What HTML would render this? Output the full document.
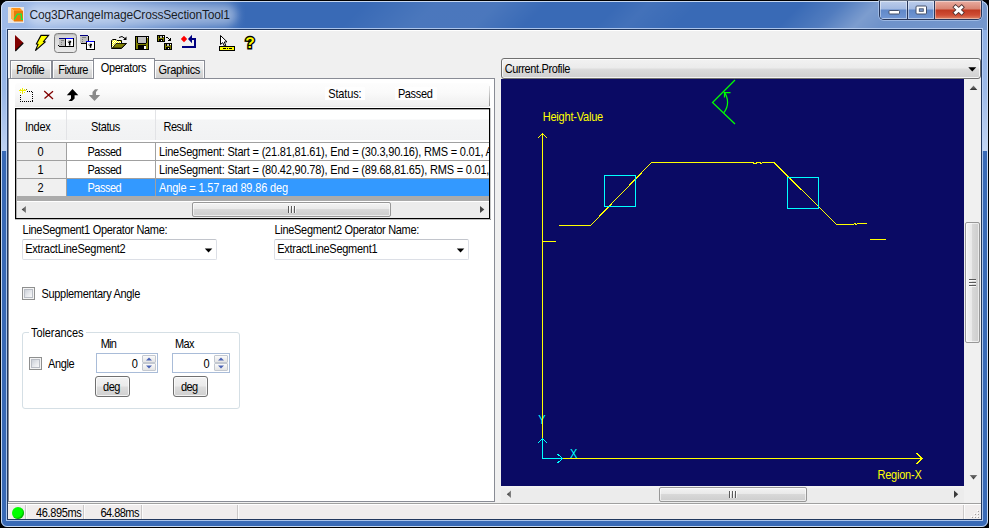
<!DOCTYPE html>
<html><head><meta charset="utf-8"><title>Cog3DRangeImageCrossSectionTool1</title>
<style>
html,body{margin:0;padding:0;}
body{width:989px;height:528px;overflow:hidden;background:#000;position:relative;font-family:"Liberation Sans",sans-serif;font-size:11px;color:#000;}
.a{position:absolute;box-sizing:border-box;}
.t{position:absolute;white-space:pre;}
#frame{left:0;top:0;width:989px;height:528px;border-radius:8px 8px 7px 7px;background:#000;overflow:hidden;}
#client{left:8px;top:30px;width:973px;height:489px;background:#f0f0f0;}
svg{position:absolute;overflow:visible;}
.px{shape-rendering:crispEdges;}

</style></head><body>
<div id="frame" class="a">
<div class="a" style="left:1px;top:1px;width:987px;height:526px;border-radius:7px 7px 6px 6px;background:#396ab6;"></div>
<div class="a" style="left:1px;top:1px;width:987px;height:29px;border-radius:7px 7px 0 0;background:
linear-gradient(135deg,rgba(255,255,255,0) 0,rgba(255,255,255,0) 36%,rgba(255,255,255,.09) 43%,rgba(255,255,255,.09) 49%,rgba(255,255,255,0) 54%,rgba(255,255,255,0) 61%,rgba(255,255,255,.05) 64%,rgba(255,255,255,0) 69%,rgba(255,255,255,0) 79%,rgba(255,255,255,.12) 83%,rgba(255,255,255,.34) 86.500%,rgba(255,255,255,.27) 89%,rgba(255,255,255,.3) 100%),
linear-gradient(90deg,rgba(160,187,232,1) 0,rgba(157,185,231,.95) 40px,rgba(150,180,228,.8) 110px,rgba(120,155,215,.45) 180px,rgba(60,108,185,0) 245px,rgba(60,108,185,0) 100%),
#396ab6;"></div>
<div class="a" style="left:2px;top:30px;width:5px;height:490px;background:linear-gradient(180deg,#8fb0e4 0,#98b6e6 60px,#bdd1f1 121px,#396ab6 121px,#396ab6 100%);"></div>
<div class="a" style="left:982px;top:30px;width:5px;height:490px;background:linear-gradient(180deg,#8fb0e4 0,#9dbae8 60px,#c3d5f2 121px,#396ab6 121px,#396ab6 100%);"></div>
<div class="a" style="left:1px;top:1px;width:987px;height:526px;border-radius:7px 7px 6px 6px;border:1px solid rgba(225,235,250,.85);"></div>
<div class="a" style="left:6px;top:28px;width:977px;height:493px;border:1px solid rgba(190,212,244,.85);"></div>
<div class="a" style="left:7px;top:29px;width:975px;height:491px;border:1px solid #22385e;"></div>

</div>
<div id="client" class="a"></div>
<div class="a" style="left:34px;top:11px;width:196px;height:8px;border-radius:4px;background:rgba(255,255,255,.42);box-shadow:0 0 8px 7px rgba(255,255,255,.42);"></div>
<svg style="left:8px;top:7px" width="16" height="16" viewBox="0 0 16 16">
<rect width="16" height="16" fill="#ece5df"/>
<polygon points="3,1 12,1 15,4 6,4" fill="#ff9418"/>
<polygon points="3,1 6,4 6,14.5 3,11.5" fill="#ffb04e"/>
<polygon points="6,4 15,4 15,14.5 6,14.5" fill="#e67a08"/>
<polyline points="6.2,12.3 9.4,7.2 13.2,7.2 13.6,12.3 15,12.3" fill="none" stroke="#10f040" stroke-width="1.3"/>
</svg>
<div class="t" style="left:29.60px;top:8px;font-size:12px;line-height:15px;height:15px;letter-spacing:-0.185px;color:rgba(0,0,0,.86);">Cog3DRangeImageCrossSectionTool1</div>
<div class="a" style="left:879px;top:1px;width:103px;height:19px;border:1px solid #26365a;border-top:none;border-radius:0 0 5px 5px;overflow:hidden;box-shadow:0 0 0 1px rgba(200,220,250,.5);">
<div class="a" style="left:0;top:0;width:28px;height:18px;background:linear-gradient(180deg,#bccdea 0,#a3bae2 8px,#6088c8 9px,#7197d4 18px);border-right:1px solid #26365a;box-shadow:inset 0 0 0 1px rgba(255,255,255,.45);"></div>
<div class="a" style="left:28px;top:0;width:27px;height:18px;background:linear-gradient(180deg,#bccdea 0,#a3bae2 8px,#6088c8 9px,#7197d4 18px);border-right:1px solid #26365a;box-shadow:inset 0 0 0 1px rgba(255,255,255,.45);"></div>
<div class="a" style="left:55px;top:0;width:46px;height:18px;background:linear-gradient(180deg,#e9ada1 0,#d88472 8px,#c03a22 9px,#cf4c34 14px,#dd8466 18px);box-shadow:inset 0 0 0 1px rgba(255,255,255,.4);"></div>
</div>
<svg style="left:879px;top:0" width="103" height="20" viewBox="879 0 103 20">
<rect x="889" y="10.500" width="10.500" height="3.500" rx="0.8" fill="#fff" stroke="#44506a" stroke-width="1"/>
<rect x="916" y="6" width="10.500" height="8" rx="1" fill="#fff" stroke="#44506a" stroke-width="1"/>
<rect x="919.300" y="8.800" width="4" height="2.500" fill="#7d9cd0" stroke="#44506a" stroke-width="0.9"/>
<path d="M955.600,7.200 L961.600,12.600 M961.600,7.200 L955.600,12.600" stroke="#4a3030" stroke-width="4.600" stroke-linecap="square" fill="none"/>
<path d="M955.600,7.200 L961.600,12.600 M961.600,7.200 L955.600,12.600" stroke="#fff" stroke-width="2.900" stroke-linecap="square" fill="none"/>
</svg>
<div class="a" style="left:8px;top:30px;width:973px;height:1px;background:#fff;"></div>
<div class="a" style="left:54px;top:33px;width:23px;height:20px;border:1px solid #7d7d7d;border-radius:3.5px;background:linear-gradient(180deg,#d2d2d2 0,#dedede 40%,#e9e9e9 100%);box-shadow:inset 0 1px 1px rgba(0,0,0,.12);"></div>
<svg style="left:8px;top:30px" width="260" height="26" viewBox="8 30 260 26">
<!-- run -->
<polygon points="15,35 23.3,42.7 15,51" fill="#800000"/>
<polyline points="15.3,51 23.3,43" fill="none" stroke="#000" stroke-width="1.1"/>
<!-- lightning -->
<polygon points="41,35.4 48.6,35.4 43.6,41.4 45.2,42 35.4,50.6 38,44.4 36.4,44 " fill="#ffff00" stroke="#000" stroke-width="1.1" stroke-linejoin="miter"/>
<g class="px">
<!-- icon3: split windows -->
<rect x="59" y="38" width="7" height="1" fill="#000080"/>
<rect x="59" y="39" width="6" height="7" fill="#c0c0c0"/>
<rect x="61" y="40" width="3" height="1" fill="#808080"/>
<rect x="61" y="42" width="1" height="1" fill="#808080"/>
<rect x="61" y="44" width="1" height="1" fill="#808080"/>
<rect x="66" y="38" width="7" height="1" fill="#0000ff"/>
<rect x="65" y="39" width="8" height="7" fill="#ffffff"/>
<rect x="73" y="38" width="1" height="9" fill="#000"/>
<rect x="59" y="46" width="15" height="1" fill="#000"/>
<rect x="58" y="45" width="1" height="1" fill="#000"/>
<rect x="65" y="39" width="1" height="7" fill="#000"/>
<rect x="67.800" y="40.800" width="3.400" height="1.900" rx=".6" fill="#000" shape-rendering="auto"/>
<rect x="68.900" y="42" width="1.500" height="3.500" fill="#000" shape-rendering="auto"/>
<rect x="68.200" y="41" width="1" height="0.800" fill="#fff" shape-rendering="auto"/>
<!-- icon4: cascaded windows -->
<rect x="80" y="35" width="8" height="1" fill="#000080"/>
<rect x="80" y="36" width="8" height="7" fill="#c0c0c0"/>
<rect x="82" y="37" width="4" height="1" fill="#808080"/>
<rect x="82" y="39" width="1" height="1" fill="#808080"/>
<rect x="82" y="41" width="1" height="1" fill="#808080"/>
<rect x="88" y="36" width="1" height="7" fill="#000"/>
<rect x="81" y="43" width="6" height="1" fill="#000"/>
<rect x="86" y="41" width="8" height="1" fill="#0000ff"/>
<rect x="87" y="42" width="7" height="7" fill="#fff"/>
<rect x="86" y="42" width="1" height="8" fill="#000"/>
<rect x="94" y="41" width="1" height="9" fill="#000"/>
<rect x="86" y="49" width="9" height="1" fill="#000"/>
<rect x="88.600" y="43.700" width="3.400" height="1.900" rx=".6" fill="#000" shape-rendering="auto"/>
<rect x="89.800" y="45" width="1.500" height="2.800" fill="#000" shape-rendering="auto"/>
<rect x="89" y="43.900" width="1" height="0.800" fill="#fff" shape-rendering="auto"/>
</g>
<!-- open folder -->
<defs><pattern id="dith" width="2" height="2" patternUnits="userSpaceOnUse"><rect width="2" height="2" fill="#ffff00"/><rect width="1" height="1" fill="#fff"/><rect x="1" y="1" width="1" height="1" fill="#fff"/></pattern></defs>
<polygon points="111.500,47.500 111.500,40.500 113,39.500 116,39.500 117,40.500 121.500,40.500 121.500,43.500 126.500,43.500 121.500,48.500 111.500,48.500" fill="url(#dith)" stroke="#000" stroke-width="1"/>
<polygon points="112.500,48 116,43.500 126,43.500 121.500,48" fill="#808000" stroke="#000" stroke-width="0.8"/>
<path d="M119,37.500 Q122,35 125,38.500" fill="none" stroke="#000" stroke-width="1"/>
<polygon points="126.500,36.500 126.500,40 123,40" fill="#000"/>
<g class="px">
<!-- floppy -->
<rect x="135" y="36" width="14" height="14" fill="#000"/>
<rect x="136" y="37" width="12" height="12" fill="#808000"/>
<rect x="138" y="37" width="8" height="6" fill="#c0c0c0"/>
<rect x="138" y="36" width="8" height="1" fill="#000"/>
<rect x="137" y="37" width="1" height="6" fill="#000"/>
<rect x="146" y="37" width="1" height="6" fill="#000"/>
<rect x="138" y="43" width="8" height="1" fill="#000"/>
<rect x="138" y="45" width="8" height="4" fill="#000"/>
<rect x="144" y="46" width="2" height="3" fill="#fff"/>
<rect x="147" y="37" width="1" height="1" fill="#fff"/>
<!-- two floppies -->
<rect x="157" y="35" width="8" height="7" fill="#000"/>
<rect x="158" y="36" width="1" height="5" fill="#808000"/>
<rect x="163" y="37" width="1" height="4" fill="#808000"/>
<rect x="158" y="38" width="6" height="1" fill="#808000"/>
<rect x="160" y="36" width="2" height="2" fill="#c0c0c0"/>
<rect x="163" y="36" width="1" height="1" fill="#fff"/>
<rect x="161" y="40" width="1" height="1" fill="#fff"/>
<rect x="164" y="43" width="8" height="7" fill="#000"/>
<rect x="165" y="44" width="1" height="5" fill="#808000"/>
<rect x="170" y="45" width="1" height="4" fill="#808000"/>
<rect x="165" y="46" width="6" height="1" fill="#808000"/>
<rect x="167" y="44" width="2" height="2" fill="#c0c0c0"/>
<rect x="170" y="44" width="1" height="1" fill="#fff"/>
<rect x="168" y="48" width="1" height="1" fill="#fff"/>
<rect x="166" y="37" width="2" height="1" fill="#000"/>
<rect x="168" y="38" width="1" height="1" fill="#000"/>
<rect x="169" y="39" width="1" height="1" fill="#000"/>
<rect x="170" y="38" width="1" height="3" fill="#000"/>
<rect x="168" y="40" width="3" height="1" fill="#000"/>
</g>
<!-- red diamond & blue arrow -->
<polygon points="184,35.800 187.200,39 184,42.200 180.800,39" fill="#ff0000"/>
<polygon points="188,39 192,34.800 192,43.200" fill="#000080"/>
<g class="px">
<rect x="192" y="38" width="4" height="2" fill="#000080"/>
<rect x="194" y="38" width="2" height="10" fill="#000080"/>
<rect x="182" y="46" width="14" height="2" fill="#000080"/>
</g>
<!-- cursor over ruler -->
<polygon points="220.500,35.500 220.500,44.500 222.700,42.600 224.400,46 225.800,45.400 224.300,42 227,41.800" fill="#fff" stroke="#000" stroke-width="1" stroke-linejoin="miter"/>
<g class="px">
<rect x="219" y="46" width="16" height="5" fill="#000"/>
<rect x="220" y="47" width="14" height="3" fill="#ffff00"/>
<rect x="223" y="48" width="3" height="1" fill="#000"/>
<rect x="227" y="48" width="1" height="1" fill="#000"/>
<rect x="229" y="48" width="3" height="1" fill="#000"/>
</g>
<text x="250" y="48.300" text-anchor="middle" font-family="Liberation Sans, sans-serif" font-weight="bold" font-size="15.500" fill="#ffff00" stroke="#000" stroke-width="2.800" opacity="0.999" paint-order="stroke" stroke-linejoin="miter" style="text-rendering:geometricPrecision">?</text>
</svg>
<div class="a" style="left:8px;top:78px;width:487px;height:424px;background:#fff;border:1px solid #898c95;"></div>
<div class="a" style="left:10px;top:60px;width:42px;height:18px;border:1px solid #898c95;border-bottom:none;background:linear-gradient(180deg,#f2f2f2 0,#ebebeb 8px,#dddddd 9px,#cfcfcf 100%);box-shadow:inset 1px 1px 0 rgba(255,255,255,.9),inset -1px 0 0 rgba(255,255,255,.9);"></div>
<div class="a" style="left:52px;top:60px;width:42px;height:18px;border:1px solid #898c95;border-bottom:none;background:linear-gradient(180deg,#f2f2f2 0,#ebebeb 8px,#dddddd 9px,#cfcfcf 100%);box-shadow:inset 1px 1px 0 rgba(255,255,255,.9),inset -1px 0 0 rgba(255,255,255,.9);"></div>
<div class="a" style="left:154px;top:60px;width:51px;height:18px;border:1px solid #898c95;border-bottom:none;background:linear-gradient(180deg,#f2f2f2 0,#ebebeb 8px,#dddddd 9px,#cfcfcf 100%);box-shadow:inset 1px 1px 0 rgba(255,255,255,.9),inset -1px 0 0 rgba(255,255,255,.9);"></div>
<div class="a" style="left:93px;top:58px;width:62px;height:21px;border:1px solid #898c95;border-bottom:none;background:#fff;"></div>
<div class="t" style="left:16.30px;top:64px;font-size:11px;line-height:13px;height:13px;letter-spacing:-0.484px;transform:scaleY(1.13);transform-origin:0 10px;">Profile</div>
<div class="t" style="left:58.30px;top:64px;font-size:11px;line-height:13px;height:13px;letter-spacing:-0.589px;transform:scaleY(1.13);transform-origin:0 10px;">Fixture</div>
<div class="t" style="left:100.80px;top:62px;font-size:11px;line-height:13px;height:13px;letter-spacing:-0.414px;transform:scaleY(1.13);transform-origin:0 10px;">Operators</div>
<div class="t" style="left:158.60px;top:64px;font-size:11px;line-height:13px;height:13px;letter-spacing:-0.329px;transform:scaleY(1.13);transform-origin:0 10px;">Graphics</div>
<div class="a" style="left:15px;top:83px;width:475px;height:24px;border-radius:3px 3px 0 0;background:linear-gradient(180deg,#fdfdfd 0,#fafafa 40%,#efefef 92%,#e6e6e6 100%);"></div>
<div class="a" style="left:489px;top:86px;width:1px;height:20px;background:linear-gradient(180deg,#e8e8e8,#909090);"></div>
<div class="a" style="left:325px;top:87px;width:40px;height:13px;background:#fefefe;"></div>
<div class="a" style="left:395px;top:87px;width:42px;height:13px;background:#fefefe;"></div>
<div class="t" style="left:328.20px;top:88px;font-size:11px;line-height:13px;height:13px;letter-spacing:-0.136px;transform:scaleY(1.13);transform-origin:0 10px;">Status:</div>
<div class="t" style="left:397.90px;top:88px;font-size:11px;line-height:13px;height:13px;letter-spacing:-0.367px;transform:scaleY(1.13);transform-origin:0 10px;">Passed</div>
<svg style="left:15px;top:84px" width="100" height="22" viewBox="15 84 100 22">
<g class="px">
<rect x="20" y="91" width="12" height="10" fill="none" stroke="#000" stroke-width="1" stroke-dasharray="1 1" transform="translate(.5,.5)"/>
<rect x="19" y="89" width="7" height="5" fill="#fbfbfb"/>
<rect x="22" y="88" width="1" height="6" fill="#f0f000"/>
<rect x="19" y="90" width="7" height="1" fill="#f0f000"/>
<rect x="20" y="89" width="1" height="1" fill="#f0f000"/><rect x="24" y="89" width="1" height="1" fill="#f0f000"/>
<rect x="20" y="92" width="1" height="1" fill="#f0f000"/><rect x="24" y="92" width="1" height="1" fill="#f0f000"/>
<rect x="26" y="89" width="1" height="1" fill="#808000"/>
</g>
<path d="M44.200,91 L53,99 M53,91.300 L44.500,98.600" stroke="#800000" stroke-width="1.300" fill="none"/>
<polygon points="72.500,89 78.300,95.200 74.600,95.200 74.600,98.500 72,101 68.600,101 71,98.500 71,95.200 66.800,95.200" fill="#000"/>
<polygon points="94.500,101 88.800,95 92.500,95 92.500,92 95,89.300 98.300,89.300 96,92 96,95 100.200,95" fill="#8a8a8a"/>
</svg>
<div class="a" style="left:15px;top:108px;width:476px;height:112px;background:#fff;"></div>
<div class="a" style="left:17px;top:110px;width:472px;height:108px;background:#ababab;"></div>
<div class="a" style="left:15px;top:108px;width:475px;height:1px;background:#000;"></div>
<div class="a" style="left:15px;top:108px;width:1px;height:111px;background:#000;"></div>
<div class="a" style="left:15px;top:218px;width:475px;height:1px;background:#000;"></div>
<div class="a" style="left:489px;top:108px;width:1px;height:111px;background:#000;"></div>
<div class="a" style="left:16px;top:109px;width:473px;height:1px;background:rgba(0,0,0,.32);"></div>
<div class="a" style="left:16px;top:109px;width:1px;height:109px;background:rgba(0,0,0,.32);"></div>
<div class="a" style="left:15px;top:219px;width:476px;height:1px;background:rgba(0,0,0,.25);"></div>
<div class="a" style="left:490px;top:108px;width:1px;height:112px;background:rgba(0,0,0,.22);"></div>
<div class="a" style="left:17px;top:110px;width:472px;height:30px;background:linear-gradient(180deg,#ffffff 0,#ffffff 9px,#f4f5f6 10px,#f1f2f3 100%);"></div>
<div class="a" style="left:66px;top:110px;width:1px;height:30px;background:#e2e3e6;"></div>
<div class="a" style="left:155px;top:110px;width:1px;height:30px;background:#e2e3e6;"></div>
<div class="t" style="left:24.90px;top:121px;font-size:11px;line-height:13px;height:13px;letter-spacing:-0.264px;transform:scaleY(1.13);transform-origin:0 10px;">Index</div>
<div class="t" style="left:91.00px;top:121px;font-size:11px;line-height:13px;height:13px;letter-spacing:-0.365px;transform:scaleY(1.13);transform-origin:0 10px;">Status</div>
<div class="t" style="left:163.60px;top:121px;font-size:11px;line-height:13px;height:13px;letter-spacing:-0.548px;transform:scaleY(1.13);transform-origin:0 10px;">Result</div>
<div class="a" style="left:17px;top:143px;width:472px;height:17px;background:#fff;"></div>
<div class="a" style="left:17px;top:143px;width:49px;height:17px;background:#f0f0f0;"></div>
<div class="a" style="left:17px;top:160px;width:472px;height:1px;background:#a0a0a0;"></div>
<div class="a" style="left:66px;top:143px;width:1px;height:18px;background:#a0a0a0;"></div>
<div class="a" style="left:155px;top:143px;width:1px;height:18px;background:#a0a0a0;"></div>
<div class="t" style="left:37.60px;top:146px;font-size:11px;line-height:13px;height:13px;letter-spacing:0.075px;transform:scaleY(1.13);transform-origin:0 10px;">0</div>
<div class="t" style="left:87.40px;top:146px;font-size:11px;line-height:13px;height:13px;letter-spacing:-0.484px;transform:scaleY(1.13);transform-origin:0 10px;">Passed</div>
<div class="t" style="left:159.00px;top:146px;font-size:11px;line-height:13px;height:13px;letter-spacing:-0.193px;width:330px;overflow:hidden;transform:scaleY(1.13);transform-origin:0 10px;">LineSegment: Start = (21.81,81.61), End = (30.3,90.16), RMS = 0.01, Angle</div>
<div class="a" style="left:17px;top:161px;width:472px;height:17px;background:#fff;"></div>
<div class="a" style="left:17px;top:161px;width:49px;height:17px;background:#f0f0f0;"></div>
<div class="a" style="left:17px;top:178px;width:472px;height:1px;background:#a0a0a0;"></div>
<div class="a" style="left:66px;top:161px;width:1px;height:18px;background:#a0a0a0;"></div>
<div class="a" style="left:155px;top:161px;width:1px;height:18px;background:#a0a0a0;"></div>
<div class="t" style="left:37.60px;top:164px;font-size:11px;line-height:13px;height:13px;letter-spacing:0.075px;transform:scaleY(1.13);transform-origin:0 10px;">1</div>
<div class="t" style="left:87.40px;top:164px;font-size:11px;line-height:13px;height:13px;letter-spacing:-0.484px;transform:scaleY(1.13);transform-origin:0 10px;">Passed</div>
<div class="t" style="left:159.00px;top:164px;font-size:11px;line-height:13px;height:13px;letter-spacing:-0.193px;width:330px;overflow:hidden;transform:scaleY(1.13);transform-origin:0 10px;">LineSegment: Start = (80.42,90.78), End = (89.68,81.65), RMS = 0.01, Angle</div>
<div class="a" style="left:17px;top:179px;width:472px;height:17px;background:#3399ff;"></div>
<div class="a" style="left:17px;top:179px;width:49px;height:17px;background:#f0f0f0;"></div>
<div class="a" style="left:66px;top:179px;width:1px;height:17px;background:#a0a0a0;"></div>
<div class="a" style="left:155px;top:179px;width:1px;height:17px;background:#a0a0a0;"></div>
<div class="t" style="left:37.60px;top:182px;font-size:11px;line-height:13px;height:13px;letter-spacing:0.075px;transform:scaleY(1.13);transform-origin:0 10px;">2</div>
<div class="t" style="left:87.40px;top:182px;font-size:11px;line-height:13px;height:13px;letter-spacing:-0.484px;color:#fff;transform:scaleY(1.13);transform-origin:0 10px;">Passed</div>
<div class="t" style="left:159.00px;top:182px;font-size:11px;line-height:13px;height:13px;letter-spacing:-0.159px;color:#fff;transform:scaleY(1.13);transform-origin:0 10px;">Angle = 1.57 rad 89.86 deg</div>
<div class="a" style="left:17px;top:140px;width:472px;height:2px;background:#fff;"></div>
<div class="a" style="left:17px;top:142px;width:472px;height:1px;background:#a0a0a0;"></div>
<div class="a" style="left:17px;top:201px;width:472px;height:17px;background:linear-gradient(180deg,#fff 0,#fff 1px,#ececec 1px,#ececec 100%);"></div>
<div class="a" style="left:192px;top:202px;width:199px;height:15px;border:1px solid #979797;border-radius:2px;background:linear-gradient(180deg,#f3f3f3 0,#e9e9e9 45%,#d8d8d8 50%,#cdcdcd 100%);box-shadow:inset 0 0 0 1px rgba(255,255,255,.6);"></div>
<svg style="left:17px;top:201px" width="472" height="17" viewBox="17 201 472 17">
<defs><linearGradient id="ag3g" x1="0" y1="0" x2="1" y2="0"><stop offset="0" stop-color="#2e2e2e"/><stop offset="1" stop-color="#8a8a8a"/></linearGradient></defs>
<polygon points="21.700,209.500 26,206 26,213" fill="url(#ag3g)"/>
<polygon points="484.300,209.500 480,206 480,213" fill="#404040"/>
<g class="px"><rect x="288" y="206" width="1" height="7" fill="#5a5a5a"/><rect x="291" y="206" width="1" height="7" fill="#5a5a5a"/><rect x="294" y="206" width="1" height="7" fill="#5a5a5a"/><rect x="289" y="206" width="1" height="7" fill="#fff" opacity=".8"/><rect x="292" y="206" width="1" height="7" fill="#fff" opacity=".8"/><rect x="295" y="206" width="1" height="7" fill="#fff" opacity=".8"/></g>
</svg>
<div class="t" style="left:22.60px;top:224px;font-size:11px;line-height:13px;height:13px;letter-spacing:-0.303px;transform:scaleY(1.13);transform-origin:0 10px;">LineSegment1 Operator Name:</div>
<div class="t" style="left:274.50px;top:224px;font-size:11px;line-height:13px;height:13px;letter-spacing:-0.310px;transform:scaleY(1.13);transform-origin:0 10px;">LineSegment2 Operator Name:</div>
<div class="a" style="left:22px;top:239px;width:195px;height:21px;border:1px solid #dcdfe6;border-top-color:#c2c5cc;border-radius:2px;background:#fff;"></div><svg style="left:204px;top:247.5px" width="9" height="5" viewBox="0 0 9 5"><polygon points="0.800,0.500 8.300,0.500 4.550,4.500" fill="#000"/></svg>
<div class="a" style="left:274px;top:239px;width:195px;height:21px;border:1px solid #dcdfe6;border-top-color:#c2c5cc;border-radius:2px;background:#fff;"></div><svg style="left:456px;top:247.5px" width="9" height="5" viewBox="0 0 9 5"><polygon points="0.800,0.500 8.300,0.500 4.550,4.500" fill="#000"/></svg>
<div class="t" style="left:25.30px;top:243px;font-size:11px;line-height:13px;height:13px;letter-spacing:-0.267px;transform:scaleY(1.13);transform-origin:0 10px;">ExtractLineSegment2</div>
<div class="t" style="left:277.30px;top:243px;font-size:11px;line-height:13px;height:13px;letter-spacing:-0.272px;transform:scaleY(1.13);transform-origin:0 10px;">ExtractLineSegment1</div>
<div class="a" style="left:22px;top:287px;width:13px;height:13px;border:1px solid #8e8f8f;background:#f4f4f4;"><div class="a" style="left:1px;top:1px;width:9px;height:9px;border:1px solid #b9bdc5;background:linear-gradient(135deg,#cbd0d8 0,#e6e8ec 55%,#f7f8f9 100%);"></div></div>
<div class="t" style="left:41.50px;top:288px;font-size:11px;line-height:13px;height:13px;letter-spacing:-0.320px;transform:scaleY(1.13);transform-origin:0 10px;">Supplementary Angle</div>
<div class="a" style="left:22px;top:332px;width:218px;height:77px;border:1px solid #d5dfe5;border-radius:3px;"></div>
<div class="a" style="left:29px;top:327px;width:57px;height:13px;background:#fff;"></div>
<div class="t" style="left:31.00px;top:327px;font-size:11px;line-height:13px;height:13px;letter-spacing:-0.080px;transform:scaleY(1.13);transform-origin:0 10px;">Tolerances</div>
<div class="t" style="left:100.80px;top:338px;font-size:11px;line-height:13px;height:13px;letter-spacing:-0.845px;transform:scaleY(1.13);transform-origin:0 10px;">Min</div>
<div class="t" style="left:175.00px;top:338px;font-size:11px;line-height:13px;height:13px;letter-spacing:-0.594px;transform:scaleY(1.13);transform-origin:0 10px;">Max</div>
<div class="a" style="left:29px;top:357px;width:13px;height:13px;border:1px solid #8e8f8f;background:#f4f4f4;"><div class="a" style="left:1px;top:1px;width:9px;height:9px;border:1px solid #b9bdc5;background:linear-gradient(135deg,#cbd0d8 0,#e6e8ec 55%,#f7f8f9 100%);"></div></div>
<div class="t" style="left:48.00px;top:358px;font-size:11px;line-height:13px;height:13px;letter-spacing:-0.368px;transform:scaleY(1.13);transform-origin:0 10px;">Angle</div>
<div class="a" style="left:96px;top:353px;width:62px;height:20px;border:1px solid #a9bcd8;background:#fff;"></div><div class="a" style="left:142px;top:355px;width:14px;height:8px;border:1px solid #c3c8d0;border-radius:1px;background:linear-gradient(180deg,#fafafa,#e4e4e4);"></div><div class="a" style="left:142px;top:363px;width:14px;height:8px;border:1px solid #c3c8d0;border-radius:1px;background:linear-gradient(180deg,#fafafa,#e4e4e4);"></div><svg style="left:142px;top:355px" width="14" height="16" viewBox="0 0 14 16"><polygon points="4,5.600 10,5.600 7,2.400" fill="#4a62b4"/><polygon points="4,10.400 10,10.400 7,13.600" fill="#4a62b4"/></svg>
<div class="a" style="left:172px;top:353px;width:58px;height:20px;border:1px solid #a9bcd8;background:#fff;"></div><div class="a" style="left:214px;top:355px;width:14px;height:8px;border:1px solid #c3c8d0;border-radius:1px;background:linear-gradient(180deg,#fafafa,#e4e4e4);"></div><div class="a" style="left:214px;top:363px;width:14px;height:8px;border:1px solid #c3c8d0;border-radius:1px;background:linear-gradient(180deg,#fafafa,#e4e4e4);"></div><svg style="left:214px;top:355px" width="14" height="16" viewBox="0 0 14 16"><polygon points="4,5.600 10,5.600 7,2.400" fill="#4a62b4"/><polygon points="4,10.400 10,10.400 7,13.600" fill="#4a62b4"/></svg>
<div class="t" style="left:131.80px;top:358px;font-size:11px;line-height:13px;height:13px;letter-spacing:-0.425px;transform:scaleY(1.13);transform-origin:0 10px;">0</div>
<div class="t" style="left:203.50px;top:358px;font-size:11px;line-height:13px;height:13px;letter-spacing:-0.325px;transform:scaleY(1.13);transform-origin:0 10px;">0</div>
<div class="a" style="left:95px;top:376px;width:35px;height:21px;border:1px solid #707070;border-radius:3px;background:linear-gradient(180deg,#f2f2f2 0,#ebebeb 9px,#dddddd 10px,#cfcfcf 100%);box-shadow:inset 0 0 0 1px rgba(255,255,255,.75);"></div>
<div class="a" style="left:173px;top:376px;width:35px;height:21px;border:1px solid #707070;border-radius:3px;background:linear-gradient(180deg,#f2f2f2 0,#ebebeb 9px,#dddddd 10px,#cfcfcf 100%);box-shadow:inset 0 0 0 1px rgba(255,255,255,.75);"></div>
<div class="t" style="left:103.00px;top:381px;font-size:11px;line-height:13px;height:13px;letter-spacing:-0.453px;transform:scaleY(1.13);transform-origin:0 10px;">deg</div>
<div class="t" style="left:181.00px;top:381px;font-size:11px;line-height:13px;height:13px;letter-spacing:-0.586px;transform:scaleY(1.13);transform-origin:0 10px;">deg</div>
<div class="a" style="left:501px;top:58px;width:480px;height:21px;border:1px solid #707070;border-radius:3px;background:linear-gradient(180deg,#f2f2f2 0,#ebebeb 9px,#dddddd 10px,#cfcfcf 100%);box-shadow:inset 0 0 0 1px rgba(255,255,255,.75);"></div>
<svg style="left:968.3px;top:66.7px" width="9" height="5" viewBox="0 0 9 5"><polygon points="0.300,0.300 8.300,0.300 4.300,4.600" fill="#000"/></svg>
<div class="t" style="left:504.70px;top:63px;font-size:11px;line-height:13px;height:13px;letter-spacing:-0.375px;transform:scaleY(1.13);transform-origin:0 10px;">Current.Profile</div>
<div class="a" style="left:501px;top:79px;width:463px;height:407px;background:#0a0a64;"></div>
<div class="t" style="left:542.70px;top:111px;font-size:11px;line-height:13px;height:13px;letter-spacing:-0.207px;color:#ffff00;transform:scaleY(1.13);transform-origin:0 10px;">Height-Value</div>
<div class="t" style="left:877.50px;top:469px;font-size:11px;line-height:13px;height:13px;letter-spacing:-0.232px;color:#ffff00;transform:scaleY(1.13);transform-origin:0 10px;">Region-X</div>
<div class="t" style="left:538.20px;top:414px;font-size:11px;line-height:13px;height:13px;letter-spacing:-0.044px;color:#00ffff;transform:scaleY(1.13);transform-origin:0 10px;">Y</div>
<div class="t" style="left:570.00px;top:448px;font-size:11px;line-height:13px;height:13px;letter-spacing:-0.344px;color:#00ffff;transform:scaleY(1.13);transform-origin:0 10px;">X</div>
<svg style="left:501px;top:79px" width="463" height="407" viewBox="501 79 463 407">
<g fill="none" stroke="#ffff00" stroke-width="1" shape-rendering="crispEdges">
<polyline points="542.500,458.500 542.500,133.500"/>
<polyline points="538,138 542.500,133.500 547,138"/>
<polyline points="542,241.500 556,241.500"/>
<polyline points="559,225.500 590.500,225.500 651.500,162.500 753,162.500 754,163.500 756,163.500 757,162.500 760,162.500 761,163.500 763,162.500 774,162.500 836.500,224.500 853,224.500 855,223.500 856,224.500 858,223.500 867,223.500"/>
<polyline points="870,239.500 886,239.500"/>
<polyline points="563,458.500 922,458.500"/>
<polyline points="916.500,453 922,458.500 916.500,464"/>
</g>
<g fill="none" stroke="#00ffff" stroke-width="1" shape-rendering="crispEdges">
<rect x="604.500" y="175.500" width="31" height="31"/>
<rect x="787.500" y="177.500" width="31" height="31"/>
<polyline points="542.500,458.500 542.500,438.500"/>
<polyline points="538,443 542.500,438.500 547,443"/>
<polyline points="542,458.500 563,458.500"/>
<polyline points="557.500,454 562.500,458.500 557.500,463"/>
</g>
<g fill="none" stroke="#00ff00" stroke-width="1.250">
<polyline points="735,80 712.500,102.500 735,124"/>
<path d="M724,112.500 A16.500,16.500 0 0 0 724,92"/>
<polyline points="724.500,97.500 724.500,92.500 730.500,92.500"/>
</g>
</svg>
<div class="a" style="left:964px;top:79px;width:17px;height:407px;background:#f0f0f0;"></div>
<div class="a" style="left:965px;top:222px;width:15px;height:121px;border:1px solid #979797;border-radius:2px;background:linear-gradient(90deg,#f3f3f3 0,#e9e9e9 45%,#d8d8d8 50%,#cdcdcd 100%);box-shadow:inset 0 0 0 1px rgba(255,255,255,.6);"></div>
<svg style="left:964px;top:79px" width="17" height="407" viewBox="964 79 17 407">
<defs><linearGradient id="ag" x1="0" y1="0" x2="0" y2="1"><stop offset="0" stop-color="#8a8a8a"/><stop offset="1" stop-color="#2e2e2e"/></linearGradient><linearGradient id="ag2" x1="0" y1="0" x2="0" y2="1"><stop offset="0" stop-color="#777"/><stop offset="1" stop-color="#2e2e2e"/></linearGradient><linearGradient id="ag3" x1="0" y1="0" x2="1" y2="0"><stop offset="0" stop-color="#2e2e2e"/><stop offset="1" stop-color="#8a8a8a"/></linearGradient></defs>
<polygon points="973.500,85.500 977.300,90 969.700,90" fill="url(#ag)"/>
<polygon points="973.500,479.500 977.300,475 969.700,475" fill="url(#ag2)"/>
<g class="px"><rect x="969" y="279" width="7" height="1" fill="#5a5a5a"/><rect x="969" y="282" width="7" height="1" fill="#5a5a5a"/><rect x="969" y="285" width="7" height="1" fill="#5a5a5a"/><rect x="969" y="280" width="7" height="1" fill="#fff" opacity=".8"/><rect x="969" y="283" width="7" height="1" fill="#fff" opacity=".8"/><rect x="969" y="286" width="7" height="1" fill="#fff" opacity=".8"/></g>
</svg>
<div class="a" style="left:501px;top:486px;width:463px;height:17px;background:linear-gradient(180deg,#f4f4f4 0,#ececec 3px,#ececec 100%);"></div>
<div class="a" style="left:964px;top:486px;width:17px;height:17px;background:#f0f0f0;"></div>
<div class="a" style="left:659px;top:487px;width:148px;height:15px;border:1px solid #979797;border-radius:2px;background:linear-gradient(180deg,#f3f3f3 0,#e9e9e9 45%,#d8d8d8 50%,#cdcdcd 100%);box-shadow:inset 0 0 0 1px rgba(255,255,255,.6);"></div>
<svg style="left:501px;top:486px" width="480" height="17" viewBox="501 486 480 17">
<polygon points="506.800,494.300 511,490.500 511,498" fill="url(#ag3)"/>
<polygon points="958.200,494.300 954,490.500 954,498" fill="#3a3a3a"/>
<g class="px"><rect x="729" y="491" width="1" height="7" fill="#5a5a5a"/><rect x="732" y="491" width="1" height="7" fill="#5a5a5a"/><rect x="735" y="491" width="1" height="7" fill="#5a5a5a"/><rect x="730" y="491" width="1" height="7" fill="#fff" opacity=".8"/><rect x="733" y="491" width="1" height="7" fill="#fff" opacity=".8"/><rect x="736" y="491" width="1" height="7" fill="#fff" opacity=".8"/></g>
</svg>
<div class="a" style="left:8px;top:503px;width:973px;height:16px;background:#f0eded;border-top:1px solid #a0a0a0;"></div>
<div class="a" style="left:8px;top:504px;width:973px;height:1px;background:#ffffff;"></div>
<div class="a" style="left:12px;top:507px;width:12px;height:12px;border-radius:6px;background:#00ff00;box-shadow:inset -1px -1px 1px rgba(0,120,0,.6);"></div>
<div class="a" style="left:25px;top:505px;width:1px;height:14px;background:#cbc8c8;"></div>
<div class="a" style="left:26px;top:505px;width:1px;height:14px;background:#fbfbfb;"></div>
<div class="a" style="left:83px;top:505px;width:1px;height:14px;background:#cbc8c8;"></div>
<div class="a" style="left:84px;top:505px;width:1px;height:14px;background:#fbfbfb;"></div>
<div class="a" style="left:141px;top:505px;width:1px;height:14px;background:#cbc8c8;"></div>
<div class="a" style="left:142px;top:505px;width:1px;height:14px;background:#fbfbfb;"></div>
<div class="a" style="left:237px;top:505px;width:1px;height:14px;background:#cbc8c8;"></div>
<div class="a" style="left:238px;top:505px;width:1px;height:14px;background:#fbfbfb;"></div>
<div class="a" style="left:963px;top:505px;width:1px;height:14px;background:#cbc8c8;"></div>
<div class="a" style="left:964px;top:505px;width:1px;height:14px;background:#fbfbfb;"></div>
<div class="t" style="left:36.10px;top:507px;font-size:11px;line-height:13px;height:13px;letter-spacing:-0.377px;transform:scaleY(1.13);transform-origin:0 10px;">46.895ms</div>
<div class="t" style="left:100.40px;top:507px;font-size:11px;line-height:13px;height:13px;letter-spacing:-0.515px;transform:scaleY(1.13);transform-origin:0 10px;">64.88ms</div>
<svg style="left:969px;top:508px" width="12" height="12" viewBox="969 508 12 12" class="px">
<g fill="#fff"><rect x="977" y="510" width="1" height="1"/><rect x="974" y="513" width="1" height="1"/><rect x="977" y="513" width="1" height="1"/><rect x="971" y="516" width="1" height="1"/><rect x="974" y="516" width="1" height="1"/><rect x="977" y="516" width="1" height="1"/></g>
<g fill="#a19d9d"><rect x="978" y="511" width="1" height="1"/><rect x="975" y="514" width="1" height="1"/><rect x="978" y="514" width="1" height="1"/><rect x="972" y="517" width="1" height="1"/><rect x="975" y="517" width="1" height="1"/><rect x="978" y="517" width="1" height="1"/></g>
</svg>
</body></html>
